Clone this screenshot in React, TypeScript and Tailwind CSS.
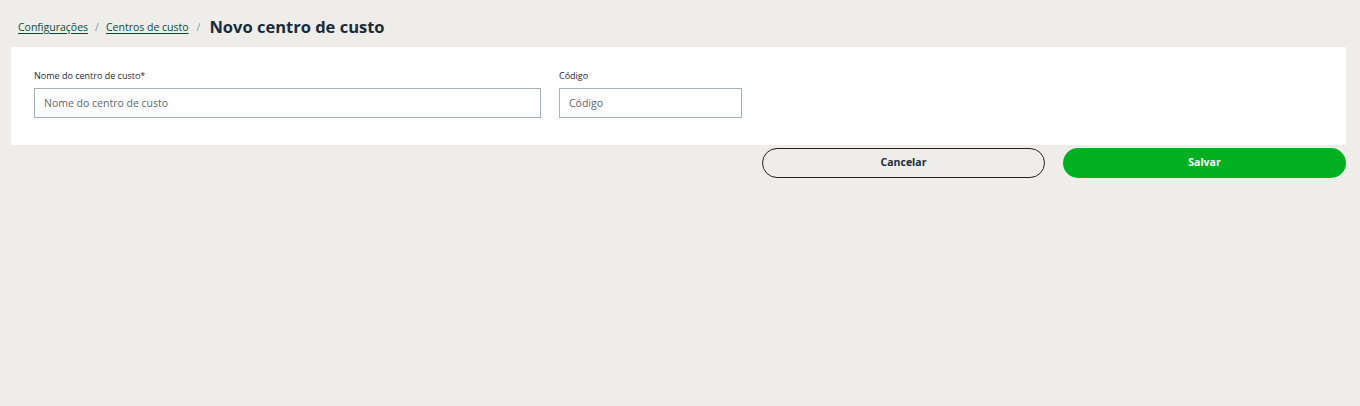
import React from 'react';

const App: React.FC = () => {
  return (
    <div className="min-h-[406px] bg-[#eeede9] pl-[11px] pr-[14px] pt-[17px] font-['Open_Sans',sans-serif]">
      <div className="flex items-center h-[21px] pl-[7px] mb-[9px]">
        <a href="#" className="text-[10.5px] text-[#0b4a3a] underline underline-offset-2">
          Configurações
        </a>
        <span className="mx-[7px] text-[10.5px] text-[#7c97ad]">/</span>
        <a href="#" className="text-[10.5px] text-[#0b4a3a] underline underline-offset-2">
          Centros de custo
        </a>
        <span className="ml-[8px] mr-[9px] text-[10.5px] text-[#7c97ad]">/</span>
        <h1 className="text-[16.5px] font-bold text-[#1b2a3a]">Novo centro de custo</h1>
      </div>
      <div className="bg-white px-[23px] pt-[22px] pb-[27px]">
        <div className="flex gap-[18px]">
          <div className="flex flex-col w-[507px]">
            <label className="text-[9px] leading-[13px] text-[#1b2a3a] mb-[6px]">Nome do centro de custo*</label>
            <input
              placeholder="Nome do centro de custo"
              className="h-[30px] border border-[#a4b2bd] px-[9px] text-[10.5px] text-[#333] placeholder:text-[#5d6670] outline-none"
            />
          </div>
          <div className="flex flex-col w-[183px]">
            <label className="text-[9px] leading-[13px] text-[#1b2a3a] mb-[6px]">Código</label>
            <input
              placeholder="Código"
              className="h-[30px] border border-[#a4b2bd] px-[9px] text-[10.5px] text-[#333] placeholder:text-[#5d6670] outline-none"
            />
          </div>
        </div>
      </div>
      <div className="flex justify-end gap-[18px] mt-[3px]">
        <button className="w-[283px] h-[30px] rounded-full border border-[#222] text-[10.5px] font-bold text-[#1b2a3a]">
          Cancelar
        </button>
        <button className="w-[283px] h-[30px] rounded-full bg-[#00b020] text-[10.5px] font-bold text-white">
          Salvar
        </button>
      </div>
    </div>
  );
};

export default App;
